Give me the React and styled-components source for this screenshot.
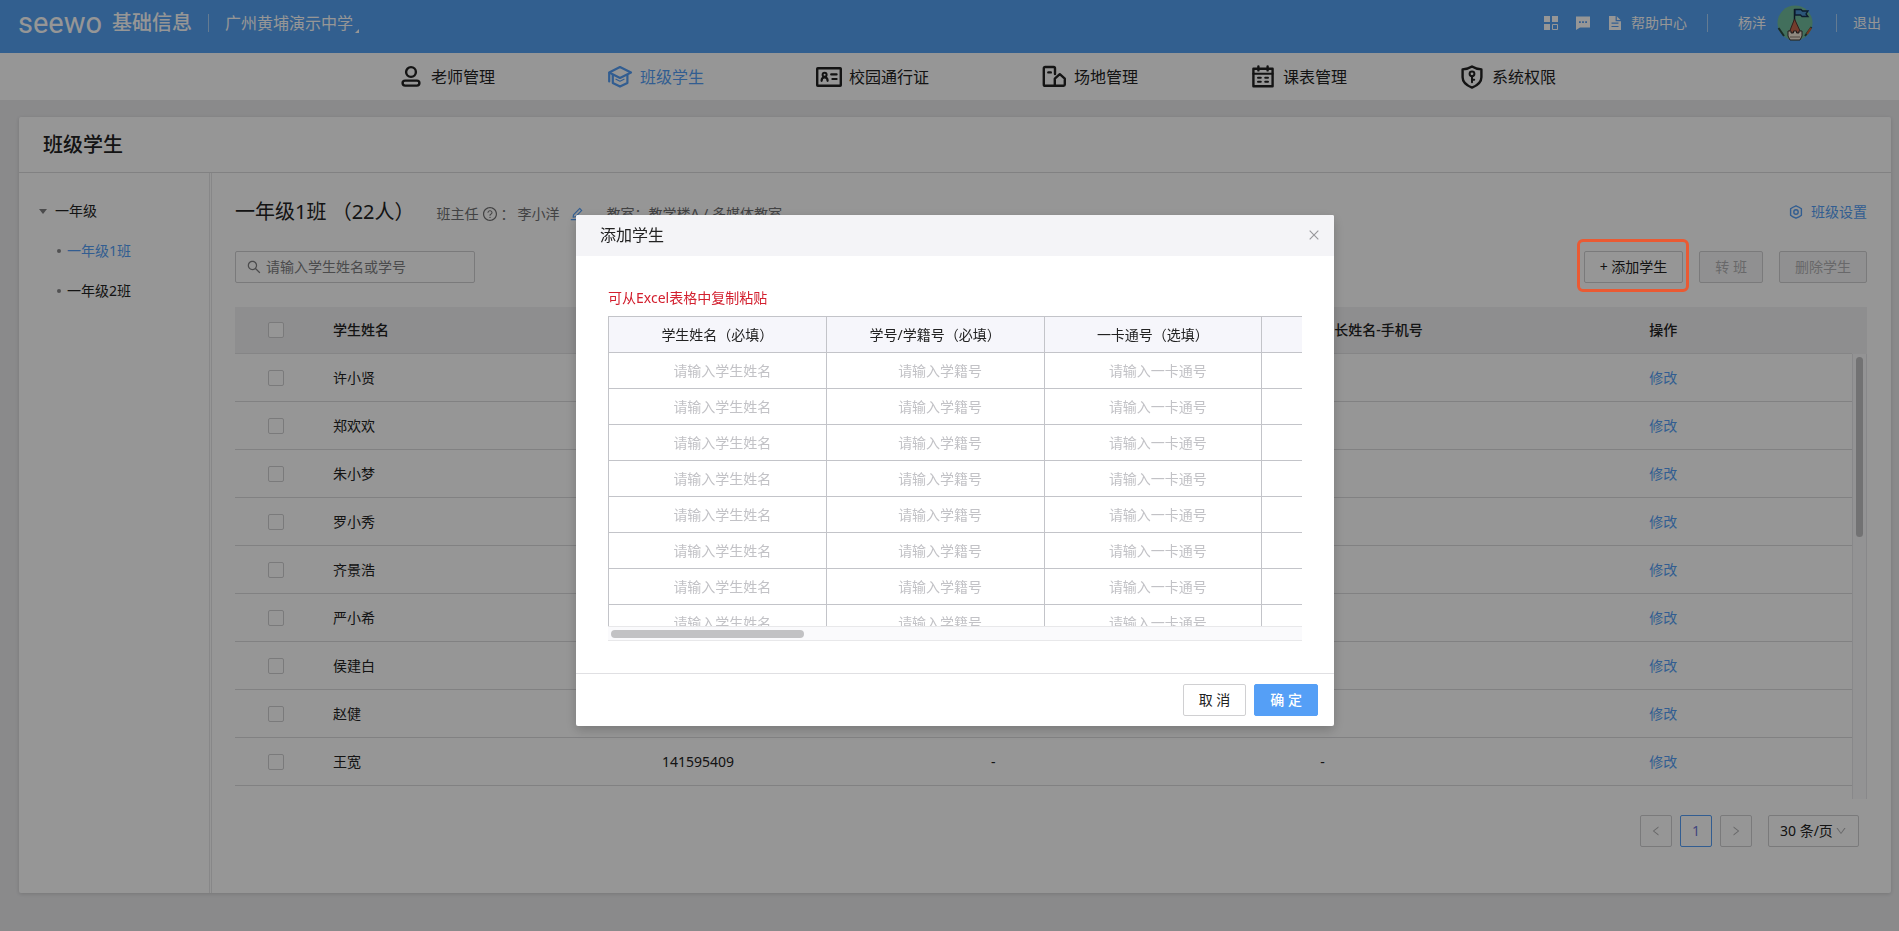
import React from 'react';
import styled, { createGlobalStyle, css } from 'styled-components';
import {
	AiOutlineClose,
	AiOutlineDown,
	AiOutlineEdit,
	AiOutlineLeft,
	AiOutlineQuestionCircle,
	AiOutlineRight,
	AiOutlineSearch
} from 'react-icons/ai';

const BLUE = '#559ff6';

const GlobalStyle = createGlobalStyle`
	* {
		box-sizing: border-box;
	}

	body {
		margin: 0;
		background: #ebebed;
		color: #222;
		font: 14px/20px "Noto Sans", "Noto Sans CJK SC", sans-serif;
	}

	button, input, select {
		font: inherit;
		color: inherit;
	}

	a {
		color: inherit;
		text-decoration: none;
	}

	h1, h2, p {
		margin: 0;
	}
`;

const Page = styled.div`
	display: flex;
	flex-direction: column;
	min-height: 100vh;
`;

/* top bar */

const TopBar = styled.header`
	display: flex;
	align-items: center;
	height: 53px;
	padding: 0 18px 7px;
	background: #55a2f3;
	color: #fff;
`;

TopBar.Logo = styled.span`
	font: 400 29px/40px Roboto, sans-serif;
`;

TopBar.Product = styled.span`
	margin-left: 10px;
	font-size: 20px;
	font-weight: 500;
`;

TopBar.Split = styled.span`
	width: 1px;
	height: 18px;
	margin: 0 ${props => props.$right || 16}px 0 ${props => props.$left || 16}px;
	background: rgba(255, 255, 255, .5);
`;

TopBar.School = styled.a`
	display: flex;
	align-items: flex-end;
	gap: 2px;
	font-size: 16px;

	&::after {
		content: '';
		border: 2px solid transparent;
		border-right-color: #fff;
		border-bottom-color: #fff;
	}
`;

TopBar.Tools = styled.div`
	display: flex;
	align-items: center;
	margin-left: auto;
`;

TopBar.Tool = styled.a`
	display: flex;
	align-items: center;
	gap: 8px;
	margin-right: ${props => props.$last ? 0 : 16}px;
`;

TopBar.User = styled.a`
	display: flex;
	align-items: center;
	gap: 11px;
`;

/* module nav */

const Nav = styled.nav`
	display: flex;
	justify-content: center;
	gap: 112px;
	height: 47px;
	padding-left: 55px;
	background: #fff;
`;

Nav.Item = styled.a`
	display: flex;
	align-items: center;
	gap: 7px;
	font-size: 16px;
	color: ${props => props.$active ? BLUE : '#222'};
`;

/* card */

const Card = styled.main`
	flex: 1;
	display: flex;
	flex-direction: column;
	margin: 17px 8px 38px 19px;
	background: #fff;
	border-radius: 2px;
	box-shadow: 0 1px 4px rgba(0, 0, 0, .15);
`;

Card.Title = styled.h1`
	padding: 13px 24px 12px;
	border-bottom: 1px solid #dcdcde;
	font-size: 20px;
	font-weight: 500;
	line-height: 30px;
`;

Card.Body = styled.div`
	flex: 1;
	display: flex;
`;

const Tree = styled.aside`
	flex: none;
	width: 193px;
	padding: 18px 0 0 20px;
	border-right: 3px double #e6e6e8;
`;

Tree.Node = styled.a`
	display: flex;
	align-items: center;
	height: 40px;
	color: ${props => props.$active ? BLUE : '#222'};

	${props => props.$leaf ? css`
		padding-left: 18px;
		gap: 6px;

		&::before {
			content: '';
			width: 4px;
			height: 4px;
			border-radius: 2px;
			background: #8a8a8c;
		}
	` : css`
		gap: 8px;

		&::before {
			content: '';
			border: 4px solid transparent;
			border-top: 5px solid #808082;
			border-bottom: 0;
		}
	`}
`;

const Main = styled.section`
	flex: 1;
	min-width: 0;
	padding: 24px 24px 16px 23px;
`;

const ClassHead = styled.div`
	display: flex;
	align-items: baseline;
	height: 30px;
`;

ClassHead.Name = styled.h2`
	font-size: 20px;
	font-weight: 400;
	line-height: 30px;
`;

ClassHead.Info = styled.div`
	display: flex;
	align-items: center;
	gap: 3px;
	margin-left: 22px;
	color: #707072;
`;

ClassHead.Edit = styled.button`
	display: flex;
	margin-left: 6px;
	padding: 0;
	border: 0;
	background: none;
	color: ${BLUE};
`;

ClassHead.Setting = styled.a`
	display: flex;
	align-items: center;
	gap: 8px;
	margin-left: auto;
	color: ${BLUE};
`;

const ToolRow = styled.div`
	display: flex;
	align-items: center;
	gap: 16px;
	margin: 24px 0;
`;

const SearchBox = styled.label`
	display: flex;
	align-items: center;
	gap: 4px;
	width: 240px;
	height: 32px;
	margin-right: auto;
	padding: 0 10px;
	border: 1px solid #d0d0d2;
	border-radius: 2px;
	color: #808082;
`;

SearchBox.Input = styled.input`
	flex: 1;
	min-width: 0;
	padding: 0;
	border: 0;
	outline: 0;
	background: none;

	&::placeholder {
		color: #808082;
	}
`;

const Button = styled.button`
	height: 32px;
	padding: 0 15px;
	border: 1px solid #d0d0d2;
	border-radius: 2px;
	background: #fff;
	white-space: nowrap;

	&:disabled {
		background: #f5f5f6;
		color: #b2b2b4;
	}

	${props => props.$primary && css`
		border-color: ${BLUE};
		background: ${BLUE};
		color: #fff;
		font-weight: 500;
	`}
`;

/* guide ring stays above the modal mask */
const Guide = styled.div`
	position: relative;

	&::after {
		content: '';
		position: absolute;
		z-index: 20;
		inset: -12px -6px -9px -7px;
		border: 3px solid #ea5a33;
		border-radius: 6px;
		pointer-events: none;
	}
`;

const Table = styled.table`
	width: 100%;
	table-layout: fixed;
	border-collapse: separate;
	border-spacing: 0;
`;

Table.Col = styled.col`
	width: ${props => props.$width};
`;

Table.Head = styled.div`
	padding-right: 15px;
	background: #f1f1f3;

	th {
		height: 47px;
		padding: 0 16px;
		border-bottom: 1px solid #e2e2e4;
		text-align: left;
		font-weight: 500;
	}
`;

Table.Body = styled.div`
	display: flex;
	height: 445px;
	overflow: hidden;

	td {
		height: 48px;
		padding: 0 16px;
		border-bottom: 1px solid #dcdcde;
	}
`;

Table.Wrap = styled.div`
	flex: 1;
	min-width: 0;
`;

Table.Check = styled.input`
	appearance: none;
	display: block;
	width: 16px;
	height: 16px;
	margin: 0 auto;
	border: 1px solid #d0d0d2;
	border-radius: 2px;
	background: #fff;
`;

Table.Edit = styled.a`
	color: ${BLUE};
`;

const Scrollbar = styled.div`
	flex: none;
	display: flex;
	background: #fafafc;
	border: 0 solid #e8e8ea;
	padding: 3px;

	&::before {
		content: '';
		border-radius: 4px;
		background: #c2c2c4;
	}

	${props => props.$horizontal ? css`
		height: 15px;
		border-width: 1px 0;

		&::before {
			width: 28%;
			height: 8px;
		}
	` : css`
		width: 15px;
		border-width: 0 1px;

		&::before {
			width: 8px;
			height: 41%;
		}
	`}
`;

const Pager = styled.div`
	display: flex;
	justify-content: flex-end;
	gap: 8px;
	margin: 16px 8px 0 0;
`;

Pager.Btn = styled.button`
	display: flex;
	align-items: center;
	justify-content: center;
	width: 32px;
	height: 32px;
	padding: 0;
	border: 1px solid ${props => props.$active ? BLUE : '#d0d0d2'};
	border-radius: 2px;
	background: #fff;
	color: ${props => props.$active ? '#7078d8' : '#b2b2b4'};
`;

Pager.Size = styled.label`
	display: flex;
	align-items: center;
	height: 32px;
	margin-left: 8px;
	padding: 0 11px;
	border: 1px solid #d0d0d2;
	border-radius: 2px;
	color: #b2b2b4;

	select {
		appearance: none;
		width: 55px;
		padding: 0;
		border: 0;
		background: none;
		color: #222;
	}
`;

/* modal */

const Mask = styled.div`
	position: fixed;
	z-index: 10;
	inset: 0;
	display: flex;
	align-items: flex-start;
	justify-content: center;
	padding: 215px 0 0 11px;
	background: rgba(0, 0, 0, .41);
`;

const Modal = styled.div`
	width: 758px;
	background: #fff;
	border-radius: 2px;
	box-shadow: 0 4px 12px rgba(0, 0, 0, .2);
`;

Modal.Head = styled.div`
	display: flex;
	align-items: center;
	justify-content: space-between;
	height: 41px;
	padding: 0 13px 2px 24px;
	background: #f4f4f7;
	border-radius: 2px 2px 0 0;
	font-size: 16px;
`;

Modal.Close = styled.button`
	display: flex;
	padding: 0;
	border: 0;
	background: none;
	color: #98989c;
`;

Modal.Body = styled.div`
	padding: 32px;
`;

Modal.Tip = styled.p`
	margin-bottom: 8px;
	color: #d3202f;
`;

Modal.Foot = styled.div`
	display: flex;
	justify-content: flex-end;
	gap: 8px;
	padding: 10px 16px;
	border-top: 1px solid #e0e0e3;
`;

const Sheet = styled.div`
	height: 310px;
	overflow: hidden;

	table {
		width: 872px;
		table-layout: fixed;
		border-spacing: 0;
		border-left: 1px solid #c3c4c9;
	}

	th, td {
		height: 36px;
		padding: 0;
		border: 0 solid #c3c4c9;
		border-width: 1px 1px 0 0;
		text-align: center;
	}

	th {
		background: #f6f6fb;
		font-weight: 400;
	}

	input {
		display: block;
		width: 100%;
		padding: 0 0 0 10px;
		border: 0;
		outline: 0;
		background: none;
		text-align: center;
	}

	input::placeholder {
		color: #c2c2c6;
	}
`;

const Icon = ({ children, ...rest }) => (
	<svg width="26" height="24" viewBox="0 0 26 24" fill="none" stroke="currentColor" strokeWidth="2.2" strokeLinejoin="round" strokeLinecap="round" aria-hidden="true" {...rest}>
		{children}
	</svg>
);

const TeacherIcon = () => (
	<Icon strokeWidth="2.4">
		<circle cx="13" cy="7" r="4.9" />
		<rect x="4.6" y="15.6" width="16.8" height="5" rx="2.5" />
	</Icon>
);

const StudentIcon = () => (
	<Icon>
		<path d="M13 2 24 7.6 13 13 2.2 7.6Z" />
		<path d="M5.8 10v8L13 21.6l7.4-3.6v-8M2.2 8v8.4" />
		<path d="m9 14.2 4 2 4-2" strokeWidth="1.2" />
	</Icon>
);

const PassIcon = () => (
	<Icon strokeWidth="2.4">
		<rect x="1.2" y="3.2" width="23.6" height="17.6" rx=".6" />
		<circle cx="8.6" cy="9.8" r="2" strokeWidth="2" />
		<path d="M5.6 15.8c0-2.2 1.2-3.4 3-3.4s3 1.2 3 3.4M15.2 9.4h5.4M16.4 14h4.2" strokeWidth="2.2" />
	</Icon>
);

const PlaceIcon = () => (
	<Icon strokeWidth="2.4">
		<path d="M14 9V3.4Q14 2 12.6 2H4.2Q2.8 2 2.8 3.4v16q0 1.4 1.4 1.4h18.4q1.2 0 1.2-1.2v-6l-5-4.4-5 4.4v7" />
		<path d="M7.4 7.4h2.4" />
	</Icon>
);

const CourseIcon = () => (
	<Icon strokeWidth="2.4">
		<path d="M3.4 3.8h19.2v17.4H3.4ZM8.4 1.4v4M17.6 1.4v4" />
		<path d="M3.4 8.8h19.2" strokeWidth="2" />
		<path d="M8 12.8h2.8M15.2 12.8H18M8 16.8h2.8M15.2 16.8H18" strokeWidth="2" />
	</Icon>
);

const PowerIcon = () => (
	<Icon strokeWidth="2.4">
		<path d="M13 1.4c2.8 1.8 5.8 2.6 9.4 3v7.8c0 4.4-4 8.2-9.4 10.4-5.4-2.2-9.400-6-9.400-10.400V4.400c3.600-.4 6.600-1.200 9.400-3Z" />
		<circle cx="13" cy="8.8" r="2.4" strokeWidth="2" />
		<path d="M13 11.4v5.8M13 14.8h2.2" strokeWidth="2" />
	</Icon>
);

const SettingIcon = () => (
	<svg width="14" height="14" viewBox="0 0 14 14" fill="none" stroke="currentColor" strokeWidth="1.4" strokeLinejoin="round" aria-hidden="true">
		<path d="M7 .8c2.2.8 4 1.8 5.4 3v6.4c-1.4 1.2-3.2 2.2-5.4 3-2.2-.8-4-1.8-5.4-3V3.8c1.4-1.2 3.2-2.2 5.4-3Z" />
		<circle cx="7" cy="7" r="2.2" />
	</svg>
);

const AppsIcon = () => (
	<svg width="16" height="16" viewBox="0 0 16 16" fill="currentColor" aria-hidden="true">
		<path d="M1 1h6v6H1ZM9 1h6v6H9ZM1 9h6v6H1Z" />
		<path d="M9.5 9.5h5v5h-5Z" fill="none" stroke="currentColor" />
	</svg>
);

const ChatIcon = () => (
	<svg width="16" height="16" viewBox="0 0 16 16" aria-hidden="true">
		<path d="M1 1.5h14v11H5l-4 2.5Z" fill="currentColor" />
		<path d="M4 6.2h1.8v1.8H4ZM7.1 6.2h1.8v1.8H7.1ZM10.2 6.2H12v1.8h-1.8Z" fill={BLUE} />
	</svg>
);

const DocIcon = () => (
	<svg width="16" height="16" viewBox="0 0 16 16" aria-hidden="true">
		<path d="M2 1h7.5L14 5.5V15H2Z" fill="currentColor" />
		<path d="M9.2 1v4.6H14M4.5 8.2h7M4.5 11.5h7" fill="none" stroke={BLUE} strokeWidth="1.2" />
	</svg>
);

const Avatar = () => (
	<svg width="36" height="36" viewBox="0 0 36 36" aria-hidden="true">
		<circle cx="18" cy="18" r="17.5" fill="#70bd9c" />
		<path d="M1.5 23 7 31M34.5 22 28 31" stroke="#2c4a42" strokeWidth="2" />
		<path d="M30 29l4-6" stroke="#c2603c" strokeWidth="2" />
		<path d="M17.5 4v12" stroke="#16243c" strokeWidth="1.5" />
		<path d="M18 4.500h6l1.500 1.500H31l-2 3 2 2.500h-6L23.500 10H18Z" fill="#4b93cf" stroke="#16304e" strokeWidth="1.3" />
		<path d="M17.5 14 12 28h12Z" fill="#c4664c" stroke="#55302c" />
		<path d="M11 26h3v2h2.5v-2h3v2H22v-2h3v5l-2 4H13l-2-4Z" fill="#f3e8d8" stroke="#3a3030" />
		<path d="M13 32h10" stroke="#8b7b70" />
	</svg>
);

const modules = [
	{ name: '老师管理', icon: TeacherIcon },
	{ name: '班级学生', icon: StudentIcon, active: true },
	{ name: '校园通行证', icon: PassIcon },
	{ name: '场地管理', icon: PlaceIcon },
	{ name: '课表管理', icon: CourseIcon },
	{ name: '系统权限', icon: PowerIcon }
];

const students = [
	{ name: '许小贤' },
	{ name: '郑欢欢' },
	{ name: '朱小梦' },
	{ name: '罗小秀' },
	{ name: '齐景浩' },
	{ name: '严小希' },
	{ name: '侯建白' },
	{ name: '赵健' },
	{ name: '王宽', no: '141595409' }
];

const sheetColumns = [
	{ title: '学生姓名（必填）', placeholder: '请输入学生姓名' },
	{ title: '学号/学籍号（必填）', placeholder: '请输入学籍号' },
	{ title: '一卡通号（选填）', placeholder: '请输入一卡通号' },
	{ title: '', placeholder: '' }
];

const Columns = () => (
	<colgroup>
		<Table.Col $width="82px" />
		<Table.Col span="4" $width="20.35%" />
		<Table.Col $width="auto" />
	</colgroup>
);

const StudentTable = () => (
	<div>
		<Table.Head>
			<Table>
				<Columns />
				<thead>
					<tr>
						<th><Table.Check type="checkbox" aria-label="全选" /></th>
						<th>学生姓名</th>
						<th>学号</th>
						<th>一卡通号</th>
						<th>家长姓名-手机号</th>
						<th>操作</th>
					</tr>
				</thead>
			</Table>
		</Table.Head>
		<Table.Body>
			<Table.Wrap>
				<Table>
					<Columns />
					<tbody>
						{ students.map(s => (
							<tr key={s.name}>
								<td><Table.Check type="checkbox" aria-label={s.name} /></td>
								<td>{s.name}</td>
								<td>{s.no}</td>
								<td>{s.no && '-'}</td>
								<td>{s.no && '-'}</td>
								<td><Table.Edit href="#">修改</Table.Edit></td>
							</tr>
						))}
					</tbody>
				</Table>
			</Table.Wrap>
			<Scrollbar />
		</Table.Body>
	</div>
);

const AddStudentModal = () => (
	<Mask>
		<Modal role="dialog" aria-label="添加学生">
			<Modal.Head>
				添加学生
				<Modal.Close aria-label="关闭"><AiOutlineClose size={14} /></Modal.Close>
			</Modal.Head>
			<Modal.Body>
				<Modal.Tip>可从Excel表格中复制粘贴</Modal.Tip>
				<Sheet>
					<table>
						<thead>
							<tr>
								{ sheetColumns.map((c, i) => <th key={i}>{c.title}</th>) }
							</tr>
						</thead>
						<tbody>
							{ Array.from({ length: 8 }, (_, row) => (
								<tr key={row}>
									{ sheetColumns.map((c, i) => (
										<td key={i}><input placeholder={c.placeholder} aria-label={c.title} /></td>
									))}
								</tr>
							))}
						</tbody>
					</table>
				</Sheet>
				<Scrollbar $horizontal />
			</Modal.Body>
			<Modal.Foot>
				<Button>取 消</Button>
				<Button $primary>确 定</Button>
			</Modal.Foot>
		</Modal>
	</Mask>
);

export default function App() {
	return (
		<Page>
			<GlobalStyle />
			<TopBar>
				<TopBar.Logo>seewo</TopBar.Logo>
				<TopBar.Product>基础信息</TopBar.Product>
				<TopBar.Split />
				<TopBar.School href="#">广州黄埔演示中学</TopBar.School>
				<TopBar.Tools>
					<TopBar.Tool href="#" aria-label="应用"><AppsIcon /></TopBar.Tool>
					<TopBar.Tool href="#" aria-label="消息"><ChatIcon /></TopBar.Tool>
					<TopBar.Tool href="#" $last><DocIcon />帮助中心</TopBar.Tool>
					<TopBar.Split $left={20} $right={30} />
					<TopBar.User href="#">杨洋<Avatar /></TopBar.User>
					<TopBar.Split $left={23} />
					<a href="#">退出</a>
				</TopBar.Tools>
			</TopBar>
			<Nav>
				{ modules.map(m => (
					<Nav.Item key={m.name} href="#" $active={m.active}>
						<m.icon />
						{m.name}
					</Nav.Item>
				))}
			</Nav>
			<Card>
				<Card.Title>班级学生</Card.Title>
				<Card.Body>
					<Tree>
						<Tree.Node href="#">一年级</Tree.Node>
						<Tree.Node href="#" $leaf $active>一年级1班</Tree.Node>
						<Tree.Node href="#" $leaf>一年级2班</Tree.Node>
					</Tree>
					<Main>
						<ClassHead>
							<ClassHead.Name>一年级1班 （22人）</ClassHead.Name>
							<ClassHead.Info>
								<span>班主任</span>
								<AiOutlineQuestionCircle size={16} />
								<span>：</span>
								<span>李小洋</span>
								<ClassHead.Edit aria-label="编辑班主任"><AiOutlineEdit size={16} /></ClassHead.Edit>
							</ClassHead.Info>
							<ClassHead.Info>教室：教学楼A / 多媒体教室</ClassHead.Info>
							<ClassHead.Setting href="#"><SettingIcon />班级设置</ClassHead.Setting>
						</ClassHead>
						<ToolRow>
							<SearchBox>
								<AiOutlineSearch size={16} />
								<SearchBox.Input placeholder="请输入学生姓名或学号" />
							</SearchBox>
							<Guide>
								<Button>+ 添加学生</Button>
							</Guide>
							<Button disabled>转 班</Button>
							<Button disabled>删除学生</Button>
						</ToolRow>
						<StudentTable />
						<Pager>
							<Pager.Btn aria-label="上一页"><AiOutlineLeft size={12} /></Pager.Btn>
							<Pager.Btn $active>1</Pager.Btn>
							<Pager.Btn aria-label="下一页"><AiOutlineRight size={12} /></Pager.Btn>
							<Pager.Size>
								<select aria-label="每页条数">
									<option>30 条/页</option>
								</select>
								<AiOutlineDown size={12} />
							</Pager.Size>
						</Pager>
					</Main>
				</Card.Body>
			</Card>
			<AddStudentModal />
		</Page>
	);
}
